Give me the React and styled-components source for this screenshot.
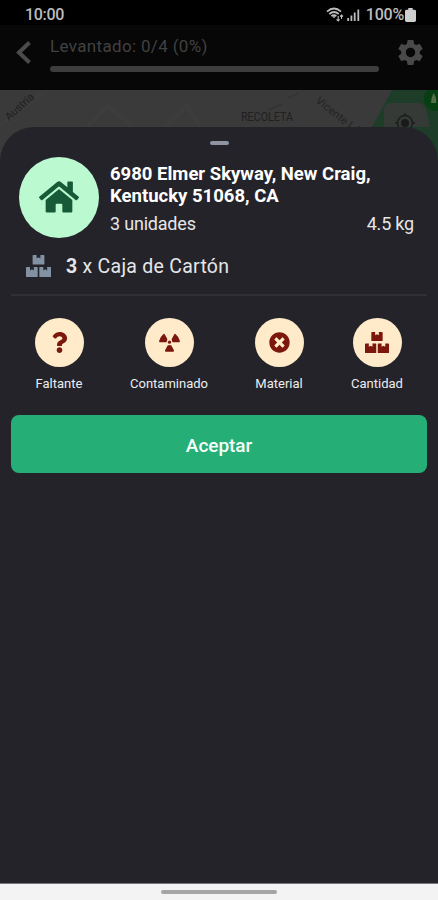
import React from "react";
import styled, { createGlobalStyle } from "styled-components";
import { FaHome, FaQuestion, FaTimesCircle } from "react-icons/fa";
import { MdSettings } from "react-icons/md";

const GlobalStyle = createGlobalStyle`
  * { box-sizing: border-box; }
  body { margin: 0; background: #000; font-family: Roboto, "Liberation Sans", sans-serif; }
`;

const Screen = styled.main`
  width: 438px;
  height: 900px;
  display: flex;
  flex-direction: column;
  overflow: hidden;
  background: #242329;
`;

const StatusBar = styled.div`
  height: 25px;
  flex: none;
  display: flex;
  align-items: center;
  justify-content: space-between;
  padding: 4px 22px 0 25px;
  background: #000;
  color: #bcbcbc;
  font-size: 16px;
  line-height: 20px;
`;

const Clock = styled.span`
  font-weight: 500;
  letter-spacing: -0.3px;
`;

const StatusIcons = styled.div`
  display: flex;
  align-items: center;
  svg { display: block; }
`;

const Battery = styled.span`
  margin: 0 1px 0 5px;
  font-weight: 500;
  letter-spacing: -0.2px;
`;

const Header = styled.header`
  height: 65px;
  flex: none;
  display: grid;
  grid-template-columns: 50px 329px 1fr;
  background: #070707;
  color: #414141;
`;

const HeaderButton = styled.button`
  border: 0;
  background: none;
  color: ${(p) => p.$color};
  display: flex;
  padding: ${(p) => p.$pad};
  svg { display: block; }
`;

const Progress = styled.div`
  padding-top: 11px;
`;

const ProgressText = styled.div`
  height: 20px;
  line-height: 20px;
  font-size: 17px;
  letter-spacing: 0.34px;
  white-space: nowrap;
`;

const ProgressTrack = styled.div`
  height: 6px;
  margin-top: 10px;
  border-radius: 3px;
  background: #3d3d3d;
`;

const MapArea = styled.div`
  height: 37px;
  flex: none;
  background: #3a3a3a;
`;

const MapDrawing = styled.svg`
  display: block;
  font-family: Roboto, sans-serif;
`;

const Sheet = styled.section`
  position: relative;
  flex: 1;
  display: flex;
  flex-direction: column;
  padding: 14px 11px 0;
  border-radius: 34px 34px 0 0;
  background: #242329;
  color: #e6e6e8;
`;

const Handle = styled.div`
  width: 19px;
  height: 4px;
  flex: none;
  margin-left: 199px;
  border-radius: 2px;
  background: #8f94a3;
`;

const Summary = styled.div`
  display: flex;
  height: 81px;
  margin-top: 12px;
  padding: 0 13px 0 8px;
`;

const Avatar = styled.div`
  width: 80px;
  height: 81px;
  flex: none;
  display: grid;
  place-items: center;
  padding-bottom: 1px;
  border-radius: 50%;
  background: #bbf9d1;
  color: #165a37;
`;

const Details = styled.div`
  flex: 1;
  padding: 6px 0 0 11px;
`;

const Address = styled.h1`
  margin: 0;
  font-size: 18.5px;
  line-height: 22px;
  font-weight: 700;
  letter-spacing: 0;
  color: #fff;
  white-space: nowrap;
`;

const Measures = styled.div`
  display: flex;
  justify-content: space-between;
  margin-top: 5px;
  font-size: 18px;
  line-height: 24px;
  letter-spacing: -0.2px;
`;

const Item = styled.div`
  height: 58px;
  display: flex;
  align-items: center;
  padding-left: 15px;
  border-bottom: 2px solid #2f2f34;
  font-size: 19.5px;
  letter-spacing: 0.26px;
  > svg { color: #8391a5; margin-right: 15px; }
`;

const Issues = styled.div`
  display: grid;
  grid-template-columns: 96px 124px 96px 100px;
  margin-top: 22px;
`;

const Issue = styled.button`
  display: flex;
  flex-direction: column;
  align-items: center;
  border: 0;
  padding: 0;
  background: none;
  color: #ededef;
  font: 13px/18px Roboto, sans-serif;
`;

const IssueIcon = styled.span`
  width: 49px;
  height: 49px;
  display: grid;
  place-items: center;
  margin-bottom: 8px;
  border-radius: 50%;
  background: #ffebc9;
  color: #7b170c;
`;

const Accept = styled.button`
  height: 58px;
  margin-top: 22px;
  border: 0;
  border-radius: 8px;
  background: #25ae75;
  color: #f5fffa;
  font: 500 19px/24px Roboto, sans-serif;
  letter-spacing: -0.05px;
  padding: 3px 0 0;
`;

const NavBar = styled.div`
  height: 17px;
  flex: none;
  display: flex;
  justify-content: center;
  padding-top: 6px;
  border-top: 1px solid #77777b;
  background: #f3f3f4;
`;

const NavHandle = styled.div`
  width: 116px;
  height: 4px;
  border-radius: 2px;
  background: #a5a5a6;
`;

function RadiationIcon({ size }) {
  return (
    <svg width={size} height={size} viewBox="0 0 21 21" fill="currentColor">
      <path d="M0.6 10.2Q-.2 9.6.3 8.5 1.5 4.7 4.5 2.1 5.3 1.5 5.8 2.4L8.3 7Q8.3 9 7.5 10.2zM20.4 10.2Q21.2 9.6 20.7 8.5 19.5 4.7 16.5 2.1 15.7 1.5 15.2 2.4L12.7 7Q12.7 9 13.5 10.2zM6 18.5 8.6 13.5Q10.5 12.7 12.4 13.5L15 18.5Q15.4 19.6 14 19.8H7Q5.6 19.6 6 18.5z" />
      <circle cx="10.5" cy="10.2" r="1.6" />
    </svg>
  );
}

function BoxesIcon({ size }) {
  return (
    <svg width={size} height={size * 0.88} viewBox="0 0 25 22" fill="currentColor">
      <path d="M7.2 0h3.4v3.4l1.9-1.1 1.9 1.1V0h3.4q.6 0 .6.6v8.3q0 .6-.6.6H7.2q-.6 0-.6-.6V.6q0-.6.6-.6z" />
      <path d="M.6 12H4v3.4l1.9-1.1 1.9 1.1V12h3.3q.6 0 .6.6v8.8q0 .6-.6.6H.6q-.6 0-.6-.6v-8.8q0-.6.6-.6z" />
      <path d="M13.9 12h3.4v3.4l1.9-1.1 1.9 1.1V12h3.3q.6 0 .6.6v8.8q0 .6-.6.6H13.9q-.6 0-.6-.6v-8.8q0-.6.6-.6z" />
    </svg>
  );
}

const issues = [
  { label: "Faltante", Icon: FaQuestion, size: 21 },
  { label: "Contaminado", Icon: RadiationIcon, size: 21 },
  { label: "Material", Icon: FaTimesCircle, size: 21 },
  { label: "Cantidad", Icon: BoxesIcon, size: 24 },
];

function SignalIcons() {
  return (
    <svg width="35" height="16" viewBox="0 0 35 16" fill="none" stroke="#bdbdbd">
      <path d="M1 4.6Q8-1.6 15 4.6M3.3 7Q8 3 12.7 7M5.4 9.1Q8 7 10.4 9.1" strokeWidth="1.7" />
      <path d="M6 9.3h4l-2 2z" fill="#bdbdbd" stroke="none" />
      <path d="M12.2 9v5m-1.7-1.7 1.7 1.7 1.4-1.7M15.5 12V8m-1.4 1.5 1.4-1.5 1.4 1.5" strokeWidth="1.1" />
      <path d="M22.2 11v3M25.4 8.5V14M28.7 5.5V14M32.3 2.5V14" strokeWidth="1.8" />
    </svg>
  );
}

function BatteryIcon() {
  return (
    <svg width="11" height="14" viewBox="0 0 10 15" preserveAspectRatio="none" fill="#cfcfcf">
      <path d="M3 0h4v2h1.5Q10 2 10 3.5v10Q10 15 8.5 15h-7Q0 15 0 13.5v-10Q0 2 1.5 2H3z" />
    </svg>
  );
}

function CityMap() {
  return (
    <MapDrawing width="438" height="75" viewBox="0 0 438 75">
      <rect width="438" height="75" fill="#3a3a3a" />
      <path d="M78 47l29-31 25 20M162 40l25-24 19 30M0 36L42 3" stroke="#3c3c3c" strokeWidth="5" fill="none" />
      <path d="M268 20l14-6M288 8l11-5" stroke="#2f2f2f" strokeWidth="1" />
      <path d="M372 37l20-37h46v75h-39z" fill="#1e3d29" />
      <path d="M384 37V20q0-7 7-7h27q6 0 8 7l4 17z" fill="#353a36" />
      <circle cx="436" cy="9" r="12" fill="#063f12" />
      <path d="M431 13q0-5 2.5-10 3.5 5 2.5 10z" fill="#536e47" />
      <g fill="none" stroke="#1c1d1c" strokeWidth="1.5">
        <circle cx="405" cy="33" r="7.5" />
        <path d="M405 23v3M395 33h3m14 0h3" />
      </g>
      <circle cx="405" cy="33" r="4" fill="#191a19" />
      <text x="9" y="31" fontSize="11" fill="#202020" transform="rotate(-42 9 31)">Austria</text>
      <text x="241" y="31" fontSize="12" fill="#202020" textLength="52" lengthAdjust="spacingAndGlyphs">RECOLETA</text>
      <text x="315" y="12" fontSize="11" fill="#232323" letterSpacing=".1" transform="rotate(38 315 12)">Vicente López</text>
    </MapDrawing>
  );
}

export default function App() {
  return (
    <>
      <GlobalStyle />
      <Screen>
        <StatusBar>
          <Clock>10:00</Clock>
          <StatusIcons>
            <SignalIcons />
            <Battery>100%</Battery>
            <BatteryIcon />
          </StatusIcons>
        </StatusBar>
        <Header>
          <HeaderButton aria-label="Volver" $color="#4b4b4b" $pad="15px 0 0 16px">
            <svg width="16" height="25" viewBox="0 0 16 25" fill="none" stroke="currentColor" strokeWidth="4">
              <path d="M13.5 2.5L3 12.5 13.5 22.5" />
            </svg>
          </HeaderButton>
          <Progress>
            <ProgressText>Levantado: 0/4 (0%)</ProgressText>
            <ProgressTrack />
          </Progress>
          <HeaderButton aria-label="Ajustes" $color="#494949" $pad="12px 0 0 16px">
            <MdSettings size={31} />
          </HeaderButton>
        </Header>
        <MapArea>
          <CityMap />
        </MapArea>
        <Sheet>
          <Handle />
          <Summary>
            <Avatar><FaHome size={40} /></Avatar>
            <Details>
              <Address>6980 Elmer Skyway, New Craig,<br />Kentucky 51068, CA</Address>
              <Measures><span>3 unidades</span><span>4.5 kg</span></Measures>
            </Details>
          </Summary>
          <Item>
            <BoxesIcon size={25} />
            <span><b>3</b> x Caja de Cartón</span>
          </Item>
          <Issues>
            {issues.map(({ label, Icon, size }) => (
              <Issue key={label}>
                <IssueIcon><Icon size={size} /></IssueIcon>
                {label}
              </Issue>
            ))}
          </Issues>
          <Accept>Aceptar</Accept>
        </Sheet>
        <NavBar><NavHandle /></NavBar>
      </Screen>
    </>
  );
}
